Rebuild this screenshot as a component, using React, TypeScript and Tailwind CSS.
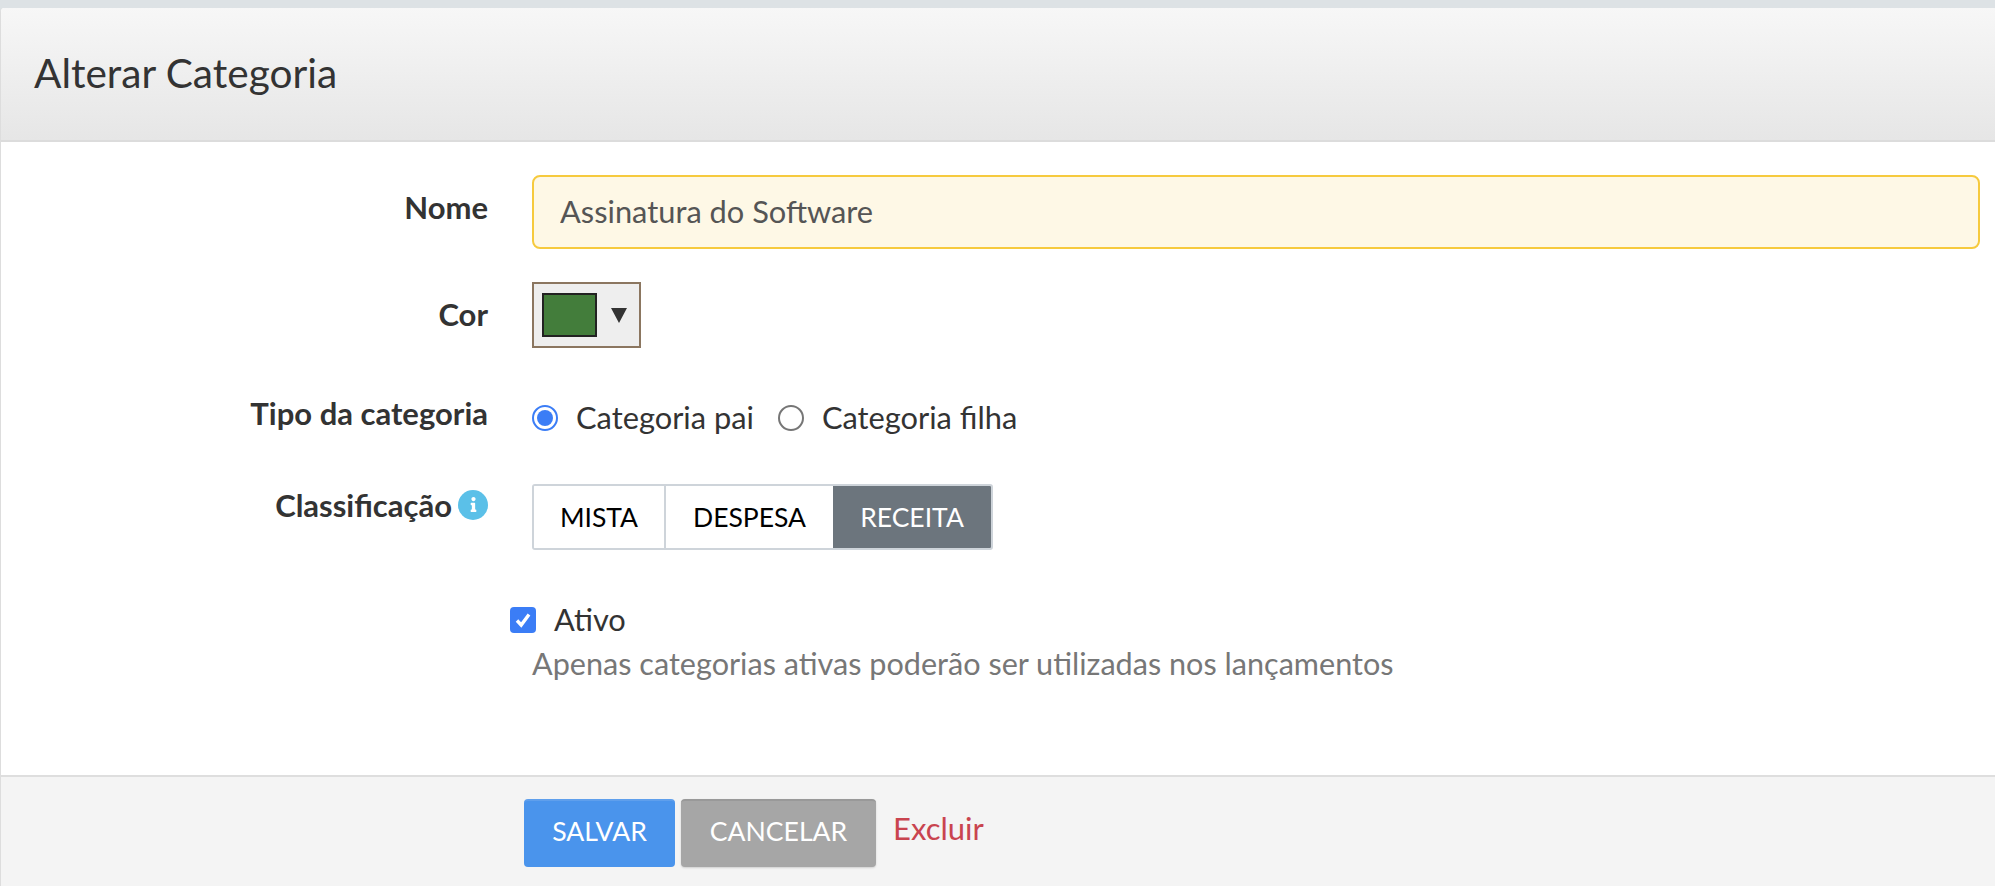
import React from 'react';
import { FaInfo } from 'react-icons/fa';

const FieldRow: React.FC<{ label: React.ReactNode; className?: string; children: React.ReactNode }> = ({ label, className, children }) => (
  <div className={`flex ${className ?? ''}`}>
    <div className="w-[487px] shrink-0 flex justify-end items-center gap-[6px] text-[31px] font-bold leading-[40px] text-[#333333]">{label}</div>
    <div className="ml-[44px] flex-1">{children}</div>
  </div>
);

const Radio: React.FC<{ checked?: boolean; label: string }> = ({ checked, label }) => (
  <label className="flex items-center gap-[18px] mr-[24px]">
    <span className={`w-[26px] h-[26px] rounded-full border-2 flex items-center justify-center bg-white ${checked ? 'border-[#3b7df6]' : 'border-[#767676]'}`}>
      {checked && <span className="w-[16px] h-[16px] rounded-full bg-[#3b7df6]" />}
    </span>
    <span className="text-[30.8px] leading-[40px] text-[#333333]">{label}</span>
  </label>
);

export default function App() {
  return (
    <div className="h-[886px] overflow-hidden bg-[#dde2e5] pt-[8px] font-['Lato',sans-serif]">
      <div className="h-[878px] flex flex-col bg-white border-l border-[#dddddd] rounded-tl-[4px] overflow-hidden">
        {/* Header */}
        <div className="h-[134px] shrink-0 flex items-center pl-[33px] pb-[2px] bg-gradient-to-b from-[#f7f7f7] to-[#e6e6e6] border-b-2 border-[#dcdcdc]">
          <h2 className="text-[40.6px] leading-none text-[#333333]">Alterar Categoria</h2>
        </div>

        {/* Form */}
        <div className="flex-1 pt-[33px]">
          <FieldRow label={<span className="-mt-[10px]">Nome</span>} className="h-[74px]">
            <input
              readOnly
              value="Assinatura do Software"
              className="w-[1448px] h-[74px] px-[26px] pb-[2px] rounded-[8px] border-2 border-[#f6ca3e] bg-[#fef8e6] text-[30.8px] text-[#555555] outline-none"
            />
          </FieldRow>

          <FieldRow label={<span className="-mt-[3px]">Cor</span>} className="h-[66px] mt-[33px]">
            <div className="w-[109px] h-[66px] flex items-center pl-[8px] border-2 border-[#8b7660] bg-[#eeeeee]">
              <div className="w-[55px] h-[44px] border-2 border-[#222222] bg-[#437d3b]" />
              <svg width="16" height="15" viewBox="0 0 16 15" className="ml-[14px]">
                <polygon points="0,0 16,0 8,15" fill="#333333" />
              </svg>
            </div>
          </FieldRow>

          <FieldRow label={<span className="-mt-[3px]">Tipo da categoria</span>} className="h-[40px] mt-[46px]">
            <div className="flex items-center mt-[4px]">
              <Radio checked label="Categoria pai" />
              <Radio label="Categoria filha" />
            </div>
          </FieldRow>

          <FieldRow
            label={
              <>
                <span className="mt-[1px]">Classificação</span>
                <span className="w-[30px] h-[30px] rounded-full bg-[#5bc0e8] flex items-center justify-center text-white">
                  <FaInfo size={15} />
                </span>
              </>
            }
            className="mt-[50px] h-[66px] items-start"
          >
            <div className="inline-flex h-[66px] border-2 border-[#ced4da] rounded-[3px] text-[26.5px] leading-none overflow-hidden">
              <div className="w-[132px] flex items-center justify-center text-black bg-white border-r-2 border-[#ced4da]">MISTA</div>
              <div className="w-[167px] flex items-center justify-center text-black bg-white">DESPESA</div>
              <div className="w-[158px] flex items-center justify-center text-white bg-[#6c757d]">RECEITA</div>
            </div>
          </FieldRow>

          <div className="ml-[509px] mt-[55px] flex items-center gap-[18px] h-[30px]">
            <span className="w-[26px] h-[26px] rounded-[4px] bg-[#3b7df6] flex items-center justify-center">
              <svg width="20" height="20" viewBox="0 0 20 20">
                <path d="M4 10.5 L8.2 15 L16 4.5" fill="none" stroke="#ffffff" strokeWidth="3.4" />
              </svg>
            </span>
            <span className="text-[30.8px] leading-[40px] text-[#333333]">Ativo</span>
          </div>
          <p className="ml-[531px] mt-[9px] text-[30.6px] leading-[40px] text-[#777777]">
            Apenas categorias ativas poderão ser utilizadas nos lançamentos
          </p>
        </div>

        {/* Footer */}
        <div className="h-[111px] shrink-0 flex items-start pt-[22px] pl-[523px] bg-[#f4f4f4] border-t-2 border-[#dedede]">
          <button className="w-[151px] h-[68px] pb-[5px] rounded-[4px] bg-[#4a94ec] border-t-2 border-[#5f9fec] text-white text-[26.6px]">SALVAR</button>
          <button className="ml-[6px] w-[195px] h-[68px] pb-[5px] rounded-[4px] bg-[#a6a6a6] border-t-2 border-[#999999] text-white text-[26.6px] shadow-[0_1px_2px_rgba(0,0,0,0.15)]">CANCELAR</button>
          <a className="ml-[17px] mt-[9px] text-[31px] leading-[40px] text-[#c9444f]">Excluir</a>
        </div>
      </div>
    </div>
  );
}
